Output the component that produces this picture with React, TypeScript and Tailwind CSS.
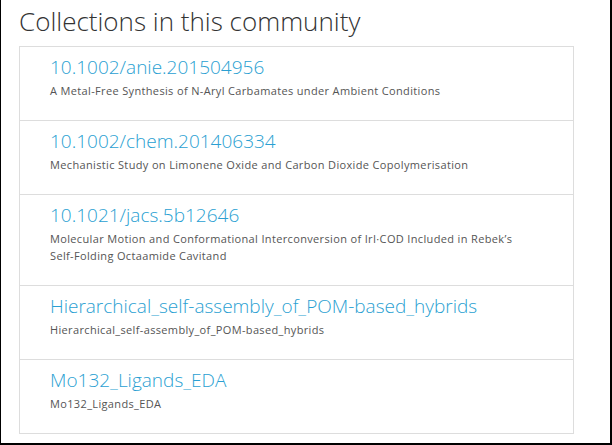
const collections = [
  {
    handle: "10.1002/anie.201504956",
    title: "A Metal-Free Synthesis of N-Aryl Carbamates under Ambient Conditions",
  },
  {
    handle: "10.1002/chem.201406334",
    title: "Mechanistic Study on Limonene Oxide and Carbon Dioxide Copolymerisation",
  },
  {
    handle: "10.1021/jacs.5b12646",
    title:
      "Molecular Motion and Conformational Interconversion of IrI·COD Included in Rebek’s Self-Folding Octaamide Cavitand",
  },
  {
    handle: "Hierarchical_self-assembly_of_POM-based_hybrids",
    title: "Hierarchical_self-assembly_of_POM-based_hybrids",
  },
  {
    handle: "Mo132_Ligands_EDA",
    title: "Mo132_Ligands_EDA",
  },
];

export default function App() {
  return (
    <div className="w-[612px] h-[445px] bg-white border-l border-r-2 border-b-2 border-black overflow-hidden font-['Open_Sans',sans-serif]">
      <div className="pl-[18px] pr-[36px]">
        <h2 className="pt-[4px] h-[46px] text-[26px] leading-[34px] font-light text-[#333]">
          Collections in this community
        </h2>

        {/* Collection list */}
        <ul className="border border-[#ddd]">
          {collections.map((c, i) => (
            <li
              key={c.handle}
              className={`pl-[30px] pr-12 pt-[6px] pb-[21px] ${i > 0 ? "border-t border-[#ddd]" : ""}`}
            >
              <a className="block text-[19px] leading-[28px] font-light text-[#2a9fd2]">
                {c.handle}
              </a>
              <p className="pt-px text-[11px] leading-[17px] tracking-[0.35px] text-[#555]">{c.title}</p>
            </li>
          ))}
        </ul>
      </div>
    </div>
  );
}
